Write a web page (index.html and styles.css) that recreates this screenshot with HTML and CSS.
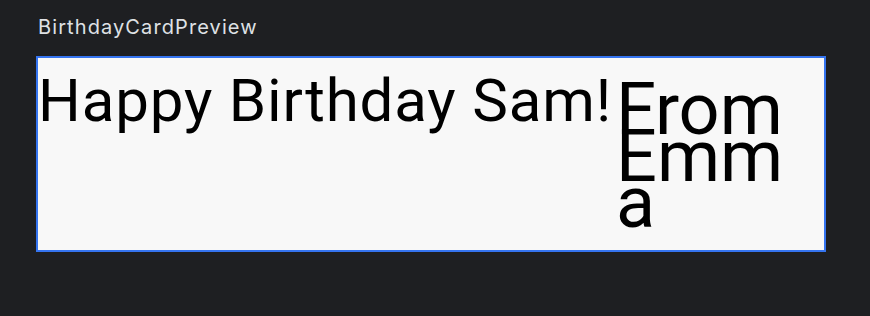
FILE: index.html
```html
<!DOCTYPE html>
<html>
<head>
<meta charset="utf-8">
<link rel="stylesheet" href="styles.css">
</head>
<body>
<div class="title">BirthdayCardPreview</div>
<div class="card">
  <div class="message">Happy Birthday Sam!</div>
  <div class="from">From Emma</div>
</div>
</body>
</html>
```
FILE: styles.css
```css
html, body {
  margin: 0;
  padding: 0;
  background: #1e1f22;
  width: 870px;
  height: 316px;
  overflow: hidden;
}
.title {
  font-family: Inter, "Noto Sans", sans-serif;
  font-size: 20px;
  letter-spacing: 1.1px;
  line-height: 24px;
  color: #dfe1e5;
  padding: 15px 0 0 38px;
  height: 24px;
}
.card {
  box-sizing: border-box;
  margin: 17px 0 0 36px;
  width: 790px;
  height: 196px;
  border: 2px solid #3574f0;
  background: #f8f8f8;
  display: flex;
  align-items: flex-start;
  color: #000;
  font-family: Roboto, "Liberation Sans", sans-serif;
}
.message {
  font-size: 60px;
  letter-spacing: 0.85px;
  line-height: 70px;
  margin-top: 8px;
  white-space: nowrap;
}
.from {
  font-size: 72px;
  line-height: 46.5px;
  margin: 29px 0 0 4px;
  width: 190px;
  overflow-wrap: anywhere;
  word-break: break-all;
}
```
